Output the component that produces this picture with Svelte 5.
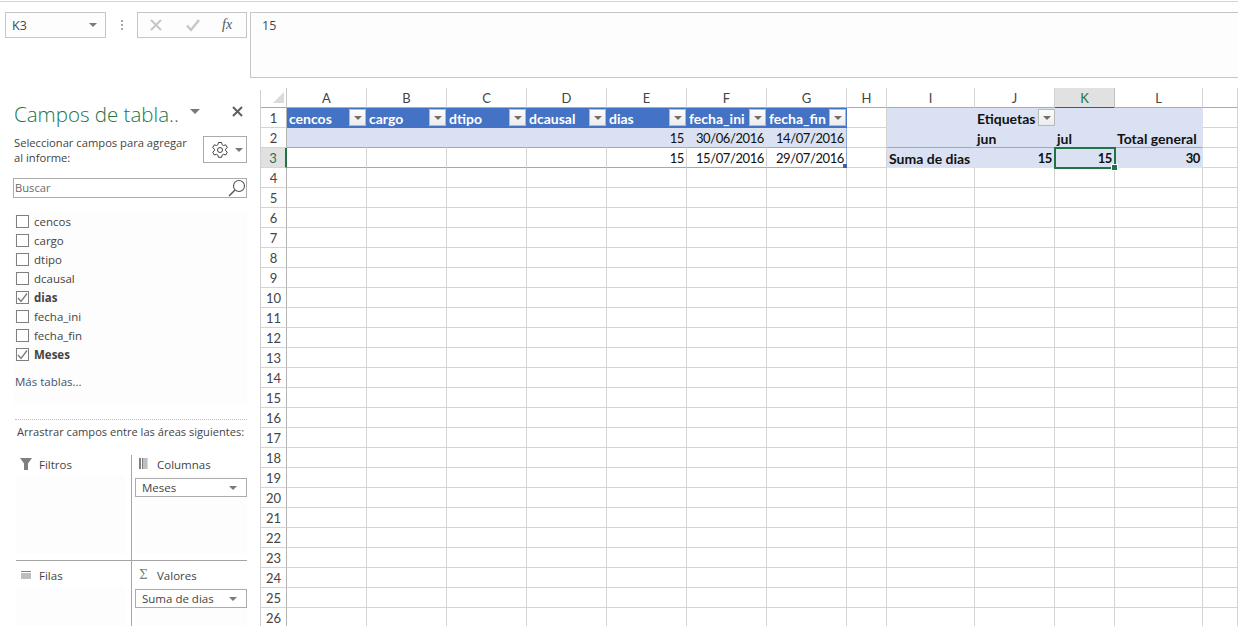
<script>
  const cols = ['A','B','C','D','E','F','G','H','I','J','K','L',''];
  const heads = ['cencos','cargo','dtipo','dcausal','dias','fecha_ini','fecha_fin'];
  const fields = [
    ['cencos', false], ['cargo', false], ['dtipo', false], ['dcausal', false],
    ['dias', true], ['fecha_ini', false], ['fecha_fin', false], ['Meses', true]
  ];
  const values = {
    'E2': '15', 'F2': '30/06/2016', 'G2': '14/07/2016',
    'E3': '15', 'F3': '15/07/2016', 'G3': '29/07/2016',
    'J1': 'Etiquetas', 'J2': 'jun', 'K2': 'jul', 'L2': 'Total general',
    'I3': 'Suma de dias', 'J3': '15', 'K3': '15', 'L3': '30'
  };
  const rows = Array.from({ length: 26 }, (_, i) => i + 1);
  const tableCols = 'ABCDEFG';
  const pivotCols = 'IJKL';

  function cellClass(c, r) {
    const out = ['cell'];
    if (c && tableCols.includes(c) && r <= 3) {
      out.push(r === 1 ? 'thead' : r === 2 ? 'band' : 'trow');
      if (c === 'G') out.push('tend');
    }
    if (c && pivotCols.includes(c) && r <= 3) {
      out.push('pivot');
      if (r === 2) out.push('pivot-line');
    }
    const key = c + r;
    if (values[key] && /^[\d/]+$/.test(values[key])) out.push('num');
    return out.join(' ');
  }
</script>

<div class="app">
  <div class="formula-bar">
    <div class="namebox"><span>K3</span><i class="tri"></i></div>
    <div class="dots"><b></b><b></b><b></b></div>
    <div class="fx-box">
      <svg class="fx-icon" width="14" height="14" viewBox="0 0 14 14"><path d="M2 2l10 10M12 2L2 12" stroke="#c6c6c6" stroke-width="2" fill="none"/></svg>
      <svg class="fx-icon" width="14" height="14" viewBox="0 0 14 14"><path d="M1 7.500l4 4.500 8-10" stroke="#c6c6c6" stroke-width="2.400" fill="none"/></svg>
      <span class="fx">fx</span>
    </div>
    <div class="formula-input">15</div>
  </div>

  <div class="main">
    <aside class="panel">
      <div class="title-row">
        <h1>Campos de tabla..</h1>
        <i class="tri title-tri"></i>
        <svg class="close" width="11" height="11" viewBox="0 0 11 11"><path d="M1 1l9 9M10 1l-9 9" stroke="#5f5f5f" stroke-width="2" fill="none"/></svg>
      </div>
      <div class="select-row">
        <p>Seleccionar campos para agregar al informe:</p>
        <div class="gear-btn">
          <svg width="18" height="18" viewBox="0 0 18 18" fill="none" stroke="#444" stroke-width="1">
            <path d="M7.400 1.500h3.200l.5 2.200 1.400.8 2.200-.7 1.600 2.800-1.700 1.500v1.600l1.700 1.500-1.600 2.800-2.200-.7-1.400.8-.5 2.200H7.400l-.5-2.200-1.400-.8-2.200.7-1.600-2.800 1.700-1.500V8.100L1.700 6.600l1.600-2.800 2.200.7 1.400-.8z"/>
            <circle cx="9" cy="9" r="2.500"/>
          </svg>
          <i class="tri small"></i>
        </div>
      </div>
      <div class="search">
        <span>Buscar</span>
        <svg width="18" height="18" viewBox="0 0 18 18" fill="none" stroke="#555" stroke-width="1.100"><circle cx="11" cy="7" r="5.500"/><path d="M7 11l-6 6" stroke-width="1.500"/></svg>
      </div>
      <div class="fields">
        {#each fields as [name, on]}
          <div class="field" class:on>
            <span class="box">
              {#if on}
                <svg width="11" height="11" viewBox="0 0 11 11"><path d="M1 6l3 3.500 6-8" stroke="#7a7a7a" stroke-width="1.300" fill="none"/></svg>
              {/if}
            </span>
            <span>{name}</span>
          </div>
        {/each}
        <div class="more">Más tablas...</div>
      </div>
      <div class="dotted"></div>
      <div class="drag-label">Arrastrar campos entre las áreas siguientes:</div>
      <div class="areas">
        <div class="area a-tl">
          <div class="area-head">
            <svg class="ai" width="14" height="12" viewBox="0 0 14 12"><path d="M0 0h12L8 5.500V12H4V5.500z" fill="#7f7f7f"/></svg>
            <span>Filtros</span>
          </div>
          <div class="well"></div>
        </div>
        <div class="area a-tr">
          <div class="area-head">
            <svg class="ai" width="14" height="12" viewBox="0 0 14 12"><path d="M0 0h2v11H0zM3 0h1.500v11H3zM5.500 0h1v11h-1zM7.500 0h.8v11h-.8z" fill="#7f7f7f"/></svg>
            <span>Columnas</span>
          </div>
          <div class="well"><div class="chip"><span>Meses</span><i class="tri small"></i></div></div>
        </div>
        <div class="area a-bl">
          <div class="area-head">
            <svg class="ai" width="14" height="12" viewBox="0 0 14 12"><path d="M1 2h10v1H1zM1 4.500h10v1H1zM1 6.500h10v1H1zM1 8.500h10v1H1z" fill="#7f7f7f"/></svg>
            <span>Filas</span>
          </div>
          <div class="well"></div>
        </div>
        <div class="area a-br">
          <div class="area-head">
            <span class="ai sigma">Σ</span>
            <span>Valores</span>
          </div>
          <div class="well"><div class="chip"><span>Suma de dias</span><i class="tri small"></i></div></div>
        </div>
      </div>
    </aside>

    <div class="sheet">
      <div class="corner"><svg width="13" height="13" viewBox="0 0 13 13"><path d="M12 1v11H1z" fill="#dadada"/></svg></div>
      {#each cols as c}
        <div class="colhead" class:sel={c === 'K'}>{c}</div>
      {/each}
      {#each rows as r}
        <div class="rowhead" class:sel={r === 3}>{r}</div>
        {#each cols as c, i}
          <div class={cellClass(c, r)}>
            {#if r === 1 && i < 7}
              <span>{heads[i]}</span><span class="fbtn"><i class="tri btn-tri"></i></span>
            {:else if c === 'J' && r === 1}
              <span class="etq">Etiquetas</span><span class="fbtn"><i class="tri btn-tri"></i></span>
            {:else if values[c + r]}
              <span>{values[c + r]}</span>
            {/if}
            {#if c === 'G' && r === 3}<i class="resize"></i>{/if}
            {#if c === 'K' && r === 3}<i class="selbox"></i>{/if}
          </div>
        {/each}
      {/each}
    </div>
  </div>
</div>

<style>
  :global(body) { margin: 0; background: #fff; overflow: hidden; }
  * { box-sizing: border-box; }
  i { display: block; font-style: normal; }
  .app { width: 1238px; height: 626px; overflow: hidden; background: #fff; font-family: "Open Sans", "Noto Sans", sans-serif; color: #444; }

  .tri { width: 0; height: 0; border-left: 5px solid transparent; border-right: 5px solid transparent; border-top: 5px solid #7a7a7a; }
  .tri.small { border-left-width: 4px; border-right-width: 4px; border-top-width: 4px; }

  .formula-bar { height: 88px; display: flex; align-items: flex-start; padding: 12px 0 0 5px; background: linear-gradient(#fff 1px, #d6d6d6 1px, #d6d6d6 2px, #fff 2px); }
  .namebox { width: 101px; height: 26px; border: 1px solid #c6c6c6; display: flex; align-items: center; justify-content: space-between; padding: 0 8px 0 6px; font-size: 12.500px; background: #fdfdfd; }
  .namebox .tri { border-left-width: 4px; border-right-width: 4px; border-top-width: 4px; }
  .dots { width: 31px; height: 26px; display: flex; flex-direction: column; align-items: center; justify-content: center; gap: 2px; }
  .dots b { width: 2px; height: 2px; background: #a8a8a8; display: block; }
  .fx-box { width: 110px; height: 26px; border: 1px solid #c6c6c6; display: flex; align-items: center; padding-left: 11px; background: #fdfdfd; }
  .fx-icon:nth-child(2) { margin-left: 23px; }
  .fx { font-family: "Liberation Serif", serif; font-style: italic; font-size: 14px; color: #555; margin-left: 22px; }
  .formula-input { margin-left: 3px; flex: 1; height: 66px; border: 1px solid #c6c6c6; border-right: 0; padding: 4px 11px; font-size: 12.500px; background: #fdfdfd; }

  .main { display: flex; height: 538px; }

  .panel { width: 261px; flex: none; border-right: 1px solid #d0d0d0; padding: 0 13px; margin-top: 2px; display: flex; flex-direction: column; }
  .panel > * { flex: none; }
  .title-row { height: 46px; padding: 10px 0 0 1px; display: flex; align-items: flex-start; }
  h1 { margin: 0; font-size: 20.500px; font-weight: 300; color: #217346; line-height: 28px; white-space: nowrap; }
  .title-tri { margin: 9px 0 0 11px; }
  .close { margin: 6px 4px 0 auto; }
  .select-row { display: flex; height: 42px; font-size: 11.200px; }
  .select-row p { margin: -1px 0 0; width: 190px; padding: 0 10px 0 1px; line-height: 15px; }
  .gear-btn { width: 44px; height: 27px; border: 1px solid #ababab; display: flex; align-items: center; gap: 6px; padding-left: 7px; }
  .search { height: 20px; border: 1px solid #ababab; display: flex; align-items: center; justify-content: space-between; font-size: 11.200px; padding: 0 0 0 1px; color: #6a6a6a; }
  .search span { margin-top: -2px; }
  .fields { height: 193px; margin-top: 14px; background: #fdfdfd; padding: 0 0 0 3px; }
  .field { height: 19px; display: flex; align-items: center; gap: 5px; font-size: 11.500px; }
  .field.on { font-weight: 700; }
  .box { width: 13px; height: 13px; border: 1px solid #7f7f7f; display: flex; align-items: center; justify-content: center; background: #fff; flex: none; }
  .more { margin: 7px 0 0 -1px; font-size: 11.500px; color: #44546a; line-height: 22px; }
  .dotted { margin: 14px 0 0 2px; border-top: 1px dotted #bcbcbc; }
  .drag-label { margin: 4px 0 0 4px; font-size: 11.100px; line-height: 15px; white-space: nowrap; }
  .panel > .areas { margin: 16px 0 0 3px; display: grid; grid-template-columns: 116px 1fr; grid-template-rows: 106px 1fr; flex: 1; font-size: 11.500px; min-height: 0; }
  .a-tl, .a-bl { border-right: 1px solid #a6a6a6; padding-right: 6px; }
  .a-tl, .a-tr { border-bottom: 1px solid #a6a6a6; }
  .a-tr, .a-br { padding-left: 3px; }
  .a-bl, .a-br { padding-top: 5px; }
  .area-head { display: flex; align-items: center; height: 20px; padding: 0 0 2px 4px; gap: 5px; }
  .a-tr .area-head, .a-br .area-head { padding-left: 4px; gap: 4px; }
  .ai { flex: none; width: 14px; }
  .sigma { font-family: "DejaVu Serif", serif; color: #7f7f7f; font-size: 12px; text-align: left; }
  .well { background: #fdfdfd; height: 78px; margin-top: 1px; padding-top: 2px; }
  .a-bl .well, .a-br .well { height: 70px; }
  .chip { height: 19px; border: 1px solid #ababab; display: flex; justify-content: space-between; align-items: center; padding: 0 9px 0 6px; background: #fff; }

  .sheet { flex: 1; display: grid; grid-template-columns: 26px repeat(7, 80px) 40px 88px 80px 60px 88px 1fr; grid-auto-rows: 20px; font-family: Lato, "Liberation Sans", sans-serif; font-size: 14px; color: #111; align-content: start; }
  .corner { border-right: 1px solid #c6c6c6; border-bottom: 1px solid #a8a8a8; display: flex; justify-content: flex-end; padding: 3px 1px 0 0; }
  .colhead { border-right: 1px solid #d4d4d4; border-bottom: 1px solid #ababab; text-align: center; font-size: 13px; line-height: 21px; color: #444; }
  .colhead.sel { background: #e1e1e1; color: #217346; border-bottom: 2px solid #217346; margin-bottom: -1px; height: 21px; border-right-color: #c0c0c0; }
  .rowhead { border-right: 1px solid #b4b4b4; border-bottom: 1px solid #d4d4d4; text-align: center; font-size: 13px; line-height: 21px; color: #444; }
  .rowhead.sel { background: #e1e1e1; color: #217346; border-right: 2px solid #217346; }

  .cell { border-right: 1px solid #d4d4d4; border-bottom: 1px solid #d4d4d4; padding: 0 2px; line-height: 21px; white-space: nowrap; display: flex; position: relative; }
  .cell:has(.selbox), .cell:has(.resize) { z-index: 2; }
  .cell.num { justify-content: flex-end; font-size: 13px; letter-spacing: -0.4px; }
  .thead { background: #4472c4; color: #fff; font-weight: 700; border: 0; justify-content: space-between; padding-right: 1px; }
  .band { background: #d9e1f2; border-right-color: #d9e1f2; border-bottom-color: #8eaadb; }
  .trow { border-bottom-color: #8eaadb; }
  .tend { border-right-color: #8eaadb; }
  .pivot { background: #d9e1f2; border-right-color: #d9e1f2; border-bottom-color: #d9e1f2; font-weight: 700; }
  .pivot-line { border-bottom-color: #8eaadb; }
  .fbtn { width: 17px; height: 17px; margin-top: 1px; background: linear-gradient(#fdfdfd, #ececec); border: 1px solid #b9b9b9; display: flex; align-items: center; justify-content: center; flex: none; }
  .btn-tri { border-left: 4px solid transparent; border-right: 4px solid transparent; border-top: 4px solid #6f6f6f; }
  .cell:has(.etq) { justify-content: space-between; padding-right: 0; }
  .cell:has(.etq) .fbtn { margin-right: -1px; }
  .resize { position: absolute; right: -1px; bottom: -1px; width: 4px; height: 4px; background: #3f5fb0; }
  .selbox { position: absolute; left: -1px; top: -1px; right: -2px; bottom: -2px; border: 2px solid #217346; }
  .selbox::after { content: ""; position: absolute; right: -3px; bottom: -3px; width: 5px; height: 5px; background: #217346; outline: 1px solid #fff; }
</style>
